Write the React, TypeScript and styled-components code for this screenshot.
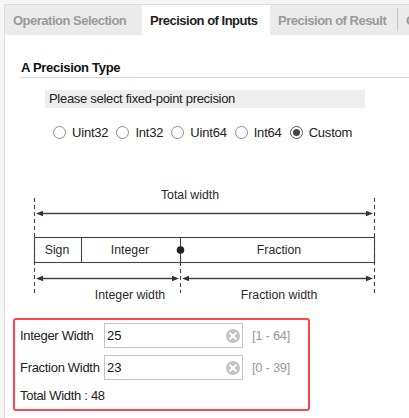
import React, { useState } from 'react';
import styled, { createGlobalStyle } from 'styled-components';

const GlobalStyle = createGlobalStyle`
  html, body {
    margin: 0;
    padding: 0;
    background: #f5f5f5;
    overflow: hidden;
    font-family: "Liberation Sans", Arial, sans-serif;
  }
`;

const Page = styled.div`
  width: 409px;
  height: 418px;
  padding: 4px 0 0 4px;
  box-sizing: border-box;
  overflow: hidden;
`;

const Frame = styled.div`
  width: 480px;
  height: 100%;
  background: #fff;
  border-left: 1px solid #dcdcdc;
  border-top: 1px solid #dcdcdc;
`;

const TabBar = styled.div`
  display: flex;
  height: 30px;
  background: #ebebeb;
  white-space: nowrap;
`;

const Tab = styled.div<{ $active?: boolean; $w: number; $sep?: boolean }>`
  width: ${p => p.$w}px;
  flex: none;
  box-sizing: border-box;
  padding-left: 8px;
  display: flex;
  align-items: center;
  font-size: 13px;
  font-weight: bold;
  letter-spacing: -0.5px;
  color: ${p => (p.$active ? '#1e1e1e' : '#9a9a9a')};
  background: ${p => (p.$active ? '#fff' : 'transparent')};
  position: relative;
  &::after {
    content: '';
    display: ${p => (p.$sep ? 'block' : 'none')};
    position: absolute;
    right: 0;
    top: 3px;
    bottom: 4px;
    width: 1px;
    background: #c4c4c4;
  }
`;

const Body = styled.div`
  padding: 25px 0 0 8px;
`;

const SectionTitle = styled.div`
  margin-left: 8px;
  font-size: 13px;
  font-weight: bold;
  letter-spacing: -0.3px;
  line-height: 15px;
  color: #111;
  padding-bottom: 2px;
  border-bottom: 1px solid #d6d6d6;
`;

const Prompt = styled.div`
  margin: 12px 0 0 32px;
  width: 320px;
  height: 18px;
  line-height: 18px;
  padding-left: 4px;
  box-sizing: border-box;
  background: #eeeeee;
  font-size: 13px;
  letter-spacing: -0.3px;
  color: #222;
`;

const RadioRow = styled.div`
  display: flex;
  align-items: center;
  gap: 8px;
  margin: 16px 0 0 40px;
  height: 16px;
`;

const RadioItem = styled.label`
  display: flex;
  align-items: center;
  gap: 6px;
  font-size: 13px;
  letter-spacing: -0.2px;
  color: #222;
  cursor: pointer;
`;

const RadioCircle = styled.span<{ $checked: boolean }>`
  width: 13px;
  height: 13px;
  box-sizing: border-box;
  border-radius: 50%;
  border: 1px solid ${p => (p.$checked ? '#555' : '#8c8c8c')};
  background: #fff;
  display: flex;
  align-items: center;
  justify-content: center;
  &::after {
    content: '';
    display: ${p => (p.$checked ? 'block' : 'none')};
    width: 7px;
    height: 7px;
    border-radius: 50%;
    background: #444;
  }
`;

const Diagram = styled.svg`
  display: block;
  margin: 40px 0 0 8px;
`;

const InputPanel = styled.div`
  margin-top: 12px;
  width: 297px;
  box-sizing: border-box;
  border: 2px solid #ff4545;
  border-radius: 3px;
  padding: 3px 5px 5px;
`;

const FieldRow = styled.div`
  display: flex;
  align-items: center;
  height: 25px;
  margin-bottom: 7px;
`;

const FieldLabel = styled.div`
  width: 84px;
  flex: none;
  font-size: 13px;
  letter-spacing: -0.3px;
  color: #222;
`;

const InputBox = styled.div`
  position: relative;
  width: 139px;
  height: 25px;
  box-sizing: border-box;
  border: 1px solid #c6c6c6;
  background: #fff;
`;

const Input = styled.input`
  width: 100%;
  height: 100%;
  box-sizing: border-box;
  border: none;
  outline: none;
  padding: 0 22px 0 2px;
  font-family: "Liberation Sans", Arial, sans-serif;
  font-size: 13px;
  color: #111;
  background: transparent;
`;

const ClearIcon = styled.svg`
  position: absolute;
  right: 1px;
  top: 4px;
`;

const Range = styled.div`
  margin-left: 9px;
  font-size: 13px;
  letter-spacing: -0.3px;
  color: #9a9a9a;
`;

const TotalLine = styled.div`
  margin-top: 8px;
  font-size: 13px;
  letter-spacing: -0.3px;
  line-height: 16px;
  color: #222;
`;

const options = ['Uint32', 'Int32', 'Uint64', 'Int64', 'Custom'];

const Arrow = ({ x1, x2, y }: { x1: number; x2: number; y: number }) => (
  <g>
    <line x1={x1 + 5} y1={y} x2={x2 - 5} y2={y} stroke="#444" strokeWidth="1.3" />
    <polygon points={`${x1},${y} ${x1 + 7},${y - 2.7} ${x1 + 7},${y + 2.7}`} fill="#333" />
    <polygon points={`${x2},${y} ${x2 - 7},${y - 2.7} ${x2 - 7},${y + 2.7}`} fill="#333" />
  </g>
);

const FixedPointDiagram = () => (
  <Diagram width="370" height="126" viewBox="0 0 370 126">
    <g fontFamily="'Liberation Sans', Arial, sans-serif" fontSize="12.3" fill="#2a2a2a" textAnchor="middle">
      <text x="169" y="19">Total width</text>
      <text x="36" y="74">Sign</text>
      <text x="109" y="74">Integer</text>
      <text x="258" y="74">Fraction</text>
      <text x="109" y="119">Integer width</text>
      <text x="258" y="119">Fraction width</text>
    </g>
    <g stroke="#444" strokeWidth="1.1" strokeDasharray="4 3" fill="none">
      <line x1="13.5" y1="18" x2="13.5" y2="113" />
      <line x1="353.5" y1="18" x2="353.5" y2="113" />
      <line x1="159.5" y1="82" x2="159.5" y2="113" />
    </g>
    <Arrow x1={15} x2={352} y={33.5} />
    <Arrow x1={15} x2={158} y={98.5} />
    <Arrow x1={161} x2={352} y={98.5} />
    <rect x="13.5" y="57.5" width="340" height="25" fill="none" stroke="#444" strokeWidth="1.1" />
    <line x1="60.5" y1="57.5" x2="60.5" y2="82.5" stroke="#444" strokeWidth="1.1" />
    <line x1="159.5" y1="57.5" x2="159.5" y2="82.5" stroke="#444" strokeWidth="1.1" />
    <circle cx="159.5" cy="70" r="3.8" fill="#222" />
  </Diagram>
);

const Field = ({ label, value, range }: { label: string; value: string; range: string }) => (
  <FieldRow>
    <FieldLabel>{label}</FieldLabel>
    <InputBox>
      <Input defaultValue={value} />
      <ClearIcon width="16" height="16" viewBox="0 0 16 16">
        <circle cx="8" cy="8" r="7" fill="#c4c4c4" />
        <path d="M5.2 5.2 L10.8 10.8 M10.8 5.2 L5.2 10.8" stroke="#fff" strokeWidth="2" strokeLinecap="round" />
      </ClearIcon>
    </InputBox>
    <Range>{range}</Range>
  </FieldRow>
);

export default function App() {
  const [type, setType] = useState('Custom');
  return (
    <Page>
      <GlobalStyle />
      <Frame>
        <TabBar>
          <Tab $w={137}>Operation Selection</Tab>
          <Tab $w={128} $active>Precision of Inputs</Tab>
          <Tab $w={128} $sep>Precision of Result</Tab>
          <Tab $w={120}>Conversion</Tab>
        </TabBar>
        <Body>
          <SectionTitle>A Precision Type</SectionTitle>
          <Prompt>Please select fixed-point precision</Prompt>
          <RadioRow>
            {options.map(o => (
              <RadioItem key={o} onClick={() => setType(o)}>
                <RadioCircle $checked={type === o} />
                {o}
              </RadioItem>
            ))}
          </RadioRow>
          <FixedPointDiagram />
          <InputPanel>
            <Field label="Integer Width" value="25" range="[1 - 64]" />
            <Field label="Fraction Width" value="23" range="[0 - 39]" />
            <TotalLine>Total Width : 48</TotalLine>
          </InputPanel>
        </Body>
      </Frame>
    </Page>
  );
}
